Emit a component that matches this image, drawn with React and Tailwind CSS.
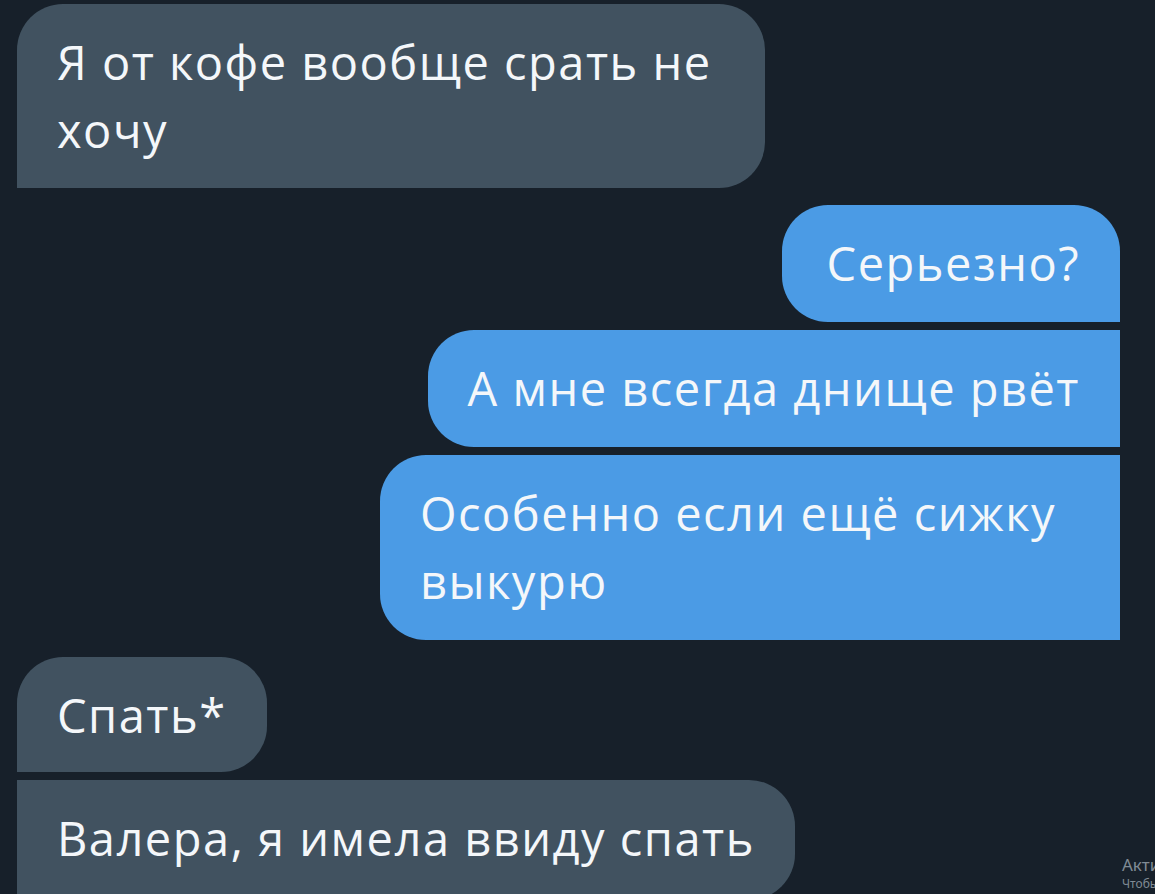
import React from 'react';

const font = { fontFamily: '"Open Sans", "Noto Sans", sans-serif' };

function Bubble({ side, corners, className, children }) {
  const color = side === 'in' ? 'bg-[#415260]' : 'bg-[#4b9be5]';
  return (
    <div
      className={`${color} ${corners} ${className} px-10 py-[24px] text-[47px] leading-[68px] tracking-[1.5px] text-[#f4f7fa]`}
    >
      {children}
    </div>
  );
}

export default function App() {
  return (
    <div className="relative h-[894px] w-[1155px] overflow-hidden bg-[#17202a]" style={font}>
      <div className="flex flex-col pl-[17px] pr-[35px] pt-[4px]">
        {/* incoming */}
        <Bubble side="in" corners="rounded-[46px] rounded-bl-none" className="w-[748px] h-[184px] py-[23px]">
          Я от кофе вообще срать не хочу
        </Bubble>

        {/* outgoing group */}
        <div className="mt-[17px] flex flex-col items-end gap-[8px]">
          <Bubble side="out" corners="rounded-[46px] rounded-br-none" className="h-[117px] min-w-[338px] whitespace-nowrap text-right">
            Серьезно?
          </Bubble>
          <Bubble side="out" corners="rounded-l-[46px]" className="h-[117px] whitespace-nowrap text-right">
            А мне всегда днище рвёт
          </Bubble>
          <Bubble side="out" corners="rounded-l-[46px]" className="h-[185px] w-[740px]">
            Особенно если ещё сижку выкурю
          </Bubble>
        </div>

        {/* incoming group */}
        <div className="mt-[17px] flex flex-col items-start gap-[8px]">
          <Bubble side="in" corners="rounded-[46px] rounded-bl-none" className="h-[115px] whitespace-nowrap">
            Спать*
          </Bubble>
          <Bubble side="in" corners="rounded-r-[46px]" className="h-[120px] w-[778px] whitespace-nowrap">
            Валера, я имела ввиду спать
          </Bubble>
        </div>
      </div>

      {/* activation watermark */}
      <div className="absolute left-[1122px] top-[854px] whitespace-nowrap text-[#808b95]" style={{ fontFamily: '"Noto Sans", sans-serif' }}>
        <div className="text-[17px] leading-[22px]">Активация Windows</div>
        <div className="text-[12px] leading-[16px]">Чтобы активировать</div>
      </div>
    </div>
  );
}
